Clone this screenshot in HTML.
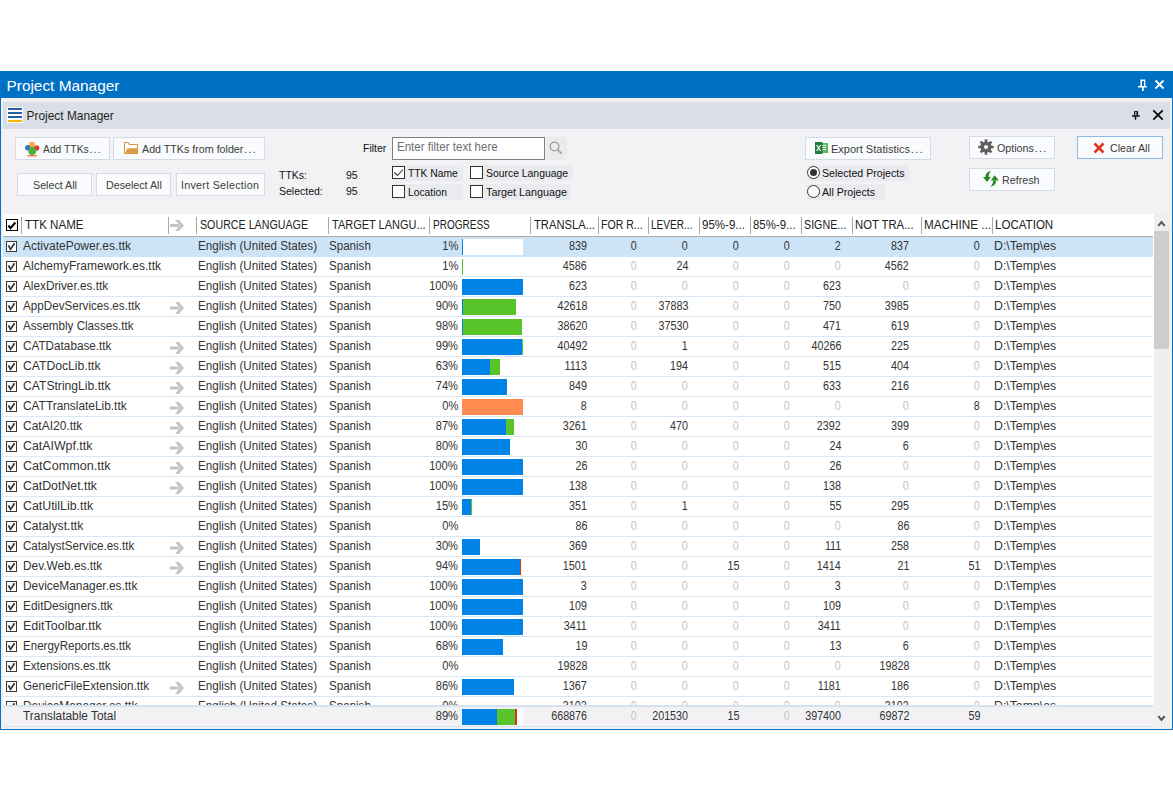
<!DOCTYPE html>
<html><head><meta charset="utf-8">
<style>
*{margin:0;padding:0;box-sizing:border-box}
html,body{width:1173px;height:800px;overflow:hidden;background:#fff;font-family:"Liberation Sans",sans-serif;}
.abs{position:absolute}
#frame{position:absolute;left:0;top:71px;width:1173px;height:659px;background:#f0f0f0;border-left:1px solid #0a6fc4;border-right:1px solid #0a6fc4;border-bottom:1px solid #0a6fc4}
#title{position:absolute;left:0;top:71px;width:1173px;height:27px;background:#0070c4}
#title .tx{position:absolute;left:6.5px;top:1px;line-height:27px;color:#fff;font-size:15.4px;white-space:nowrap}
#hdr{position:absolute;left:3px;top:102px;width:1167px;height:27px;background:#dadee7}
#hdr .tx{position:absolute;left:23.6px;top:1px;line-height:27px;color:#1e1e1e;font-size:11.9px;white-space:nowrap}
#tool{position:absolute;left:3px;top:129px;width:1167px;height:85px;background:#f2f2f4}
.btn{position:absolute;height:23px;background:#fafbfc;border:1px solid #d5dbe6;color:#3b3b3b;font-size:10.7px;line-height:23px;white-space:nowrap;}
.btn .l{position:absolute;top:0}
.lbl{position:absolute;color:#111;font-size:10.5px;white-space:nowrap;line-height:14px}
.ck{position:absolute;width:13px;height:13px;border:1px solid #333;background:#fff}
.ckbg{position:absolute;background:#eaebee}
.rd{position:absolute;width:13px;height:13px;border:1px solid #333;border-radius:50%;background:#fff}
#grid{position:absolute;left:3px;top:214px;width:1151px;height:491px;background:#fff;overflow:hidden}
#gh{position:absolute;left:0;top:0;width:1150px;height:23px;border-bottom:1px solid #a9a9a9;background:#fff}
#gh .h{position:absolute;top:0;line-height:22px;font-size:12px;color:#222;white-space:nowrap;transform-origin:0 0}
#gh .sep{position:absolute;top:3px;width:1px;height:17px;background:#a8a8a8}
.row{position:absolute;left:0;width:1150px;height:20px;border-bottom:1px solid #d8e8f7;background:#fff}
.row.sel{background:#cde4f7;border-bottom-color:#cde4f7}
.t{position:absolute;top:0;line-height:18px;font-size:12px;color:#333;white-space:nowrap}
.nm{left:20px;transform-origin:0 0}
.sl{left:195px;transform:scaleX(0.97);transform-origin:0 0}
.tl{left:326px;transform:scaleX(0.965);transform-origin:0 0}
.pc{right:695px;transform:scaleX(0.93);transform-origin:100% 0}
.loc{left:991px;transform:scaleX(1.025);transform-origin:0 0}
.n{transform:scaleX(0.895);transform-origin:100% 0}
.z{color:#c3c3c3}
.cb{position:absolute;left:3px;top:4px;width:11px;height:11px;border:1px solid #3a3a3a;background:#fff}
.cb svg{position:absolute;left:-1px;top:-1px}
.arr{position:absolute;left:167px;top:5px}
.bar{position:absolute;left:459px;top:2px;width:61px;height:16px;background:#fff}
.bar b{position:absolute;top:0;height:16px}
.bar .b{background:#0083e6}
.bar .g{background:#58c42a}
.bar .o{background:#ff8b50}
.bar .r{background:#e4301c}
#foot{position:absolute;left:3px;top:705px;width:1150px;height:22px;background:#f2f2f5;border-top:2px solid #d7e2ee;border-bottom:1px solid #d5e6f6}
#foot .t{top:0;line-height:19px}
#sb{position:absolute;left:1154px;top:214px;width:17px;height:513px;background:#efefef}
#thumb{position:absolute;left:0;top:17px;width:15px;height:118px;background:#cdcdcd}
</style></head><body>
<div id="frame"></div>
<div id="title"><span class="tx">Project Manager</span>
 <svg class="abs" style="left:1138px;top:8px" width="10" height="12" viewBox="0 0 10 12"><path d="M2.4 0.6h4.9v1.3H2.4z M2.4 0.6h1.6v6.6H2.4z M6.1 0.6h1.2v6.6H6.1z M0 7h8.8v1.5H0z M4 8.5h1.75V12H4z" fill="#fff"/></svg>
 <svg class="abs" style="left:1154px;top:8px" width="11" height="11" viewBox="0 0 11 11"><path d="M1.5 1.5l8 8M9.5 1.5l-8 8" stroke="#fff" stroke-width="1.8"/></svg>
</div>
<div id="hdr">
 <svg class="abs" style="left:4px;top:5px" width="16" height="16" viewBox="0 0 16 16"><rect x="0" y="0" width="16" height="16" fill="#fff"/><path d="M1 1h14v2H1z M1 5h14v2H1z M1 9h14v2H1z" fill="#2b5ea6"/><path d="M1 13h14v2H1z" fill="#f7b500"/></svg>
 <span class="tx">Project Manager</span>
 <svg class="abs" style="left:1129px;top:9px" width="8" height="10" viewBox="0 0 8 10"><path d="M2 0.1h4.1v4.2H2z" fill="#111"/><path d="M3.3 1.1h1.1v3H3.3z" fill="#dadee7"/><path d="M0 4.25h7.8v1.5H0z M2.75 5.7h1.5v3.1H2.75z" fill="#111"/></svg>
 <svg class="abs" style="left:1149px;top:7px" width="12" height="12" viewBox="0 0 12 12"><path d="M1.3 1.3l9.4 9.4M10.7 1.3l-9.4 9.4" stroke="#000" stroke-width="1.7"/></svg>
</div>
<div id="tool"></div>
<!-- toolbar buttons -->
<div class="btn" style="left:15px;top:137px;width:95px">
 <svg class="abs" style="left:9px;top:4px" width="15" height="15" viewBox="0 0 15 15"><circle cx="2.8" cy="5.8" r="2.7" fill="#2f6fd0"/><circle cx="11.6" cy="6" r="2.7" fill="#d63a32"/><circle cx="7" cy="2.6" r="2.8" fill="#eda53a"/><circle cx="7.2" cy="9" r="3.9" fill="#4caf3c"/><rect x="2.5" y="13" width="9.5" height="1.4" fill="#f07c3a"/></svg>
 <span class="l" style="left:27px;transform:scaleX(0.965);transform-origin:0 0">Add TTKs<span style="letter-spacing:1.3px;margin-left:0.8px">...</span></span></div>
<div class="btn" style="left:113px;top:137px;width:152px">
 <svg class="abs" style="left:10px;top:4px" width="15" height="13" viewBox="0 0 15 13"><path d="M0.5 0.5H4L5.5 2.5H13.5V11.5H0.5Z" fill="#fff" stroke="#dc9640" stroke-width="1.1"/><path d="M1 11.8L3.3 6.2H14V11.8Z" fill="#dd9a48"/></svg>
 <span class="l" style="left:28px">Add TTKs from folder<span style="letter-spacing:1.3px;margin-left:0.8px">...</span></span></div>
<div class="btn" style="left:17px;top:173px;width:75px;height:23px"><span class="l" style="left:15px">Select All</span></div>
<div class="btn" style="left:96px;top:173px;width:75px;height:23px"><span class="l" style="left:9px">Deselect All</span></div>
<div class="btn" style="left:176px;top:173px;width:89px;height:23px"><span class="l" style="left:4px;letter-spacing:0.28px">Invert Selection</span></div>

<span class="lbl" style="left:279px;top:168px">TTKs:</span>
<span class="lbl" style="left:346px;top:168px">95</span>
<span class="lbl" style="left:279px;top:184px">Selected:</span>
<span class="lbl" style="left:346px;top:184px">95</span>

<span class="lbl" style="left:363px;top:141px">Filter</span>
<div class="abs" style="left:392px;top:137px;width:153px;height:23px;background:#fff;border:1px solid #7f7f7f"><span class="abs" style="left:3.6px;top:0;line-height:19px;font-size:11.9px;color:#6e6e6e;white-space:nowrap;transform:scaleX(0.97);transform-origin:0 0">Enter filter text here</span></div>
<div class="abs" style="left:546px;top:137px;width:21px;height:23px;background:#ebebee"><svg class="abs" style="left:3px;top:4px" width="14" height="14" viewBox="0 0 14 14"><circle cx="5.5" cy="5.5" r="4.3" fill="none" stroke="#9a9a9a" stroke-width="1.3"/><path d="M8.6 8.6l4 4" stroke="#9a9a9a" stroke-width="1.6"/></svg></div>

<div class="ckbg" style="left:392px;top:165px;width:71px;height:16px"></div>
<div class="ckbg" style="left:470px;top:165px;width:103px;height:16px"></div>
<div class="ckbg" style="left:392px;top:184px;width:71px;height:16px"></div>
<div class="ckbg" style="left:470px;top:184px;width:101px;height:16px"></div>
<div class="ck" style="left:392px;top:166px"><svg class="abs" style="left:0;top:0" width="11" height="11" viewBox="0 0 11 11"><path d="M1.5 5.5l3 3 5.5-6" fill="none" stroke="#333" stroke-width="1.1"/></svg></div>
<div class="ck" style="left:470px;top:166px"></div>
<div class="ck" style="left:392px;top:185px"></div>
<div class="ck" style="left:470px;top:185px"></div>
<span class="lbl" style="left:408px;top:167px;font-size:10.3px">TTK Name</span>
<span class="lbl" style="left:486px;top:167px;font-size:10.4px">Source Language</span>
<span class="lbl" style="left:408px;top:186px;font-size:10.3px">Location</span>
<span class="lbl" style="left:486px;top:185px;font-size:10.8px">Target Language</span>

<div class="btn" style="left:805px;top:137px;width:126px">
 <svg class="abs" style="left:9px;top:4px" width="13" height="12" viewBox="0 0 13 12"><rect x="4" y="1" width="9" height="10" fill="#5cb85c"/><path d="M6 3h5v1H6zM6 5h5v1H6zM6 7h5v1H6z" fill="#fff"/><rect x="0" y="0" width="7.5" height="12" fill="#1e7b3c"/><path d="M1.6 3l4 6M5.6 3l-4 6" stroke="#fff" stroke-width="1.2"/></svg>
 <span class="l" style="left:25px;transform:scaleX(1.03);transform-origin:0 0">Export Statistics<span style="letter-spacing:1.3px;margin-left:0.8px">...</span></span></div>
<div class="ckbg" style="left:807px;top:165px;width:102px;height:16px"></div>
<div class="ckbg" style="left:807px;top:184px;width:78px;height:16px"></div>
<div class="rd" style="left:807px;top:166px"><div class="abs" style="left:1.8px;top:1.8px;width:7.4px;height:7.4px;border-radius:50%;background:#333"></div></div>
<div class="rd" style="left:807px;top:185px"></div>
<span class="lbl" style="left:822px;top:166px;font-size:10.6px">Selected Projects</span>
<span class="lbl" style="left:822px;top:185px;font-size:10.6px">All Projects</span>

<div class="btn" style="left:969px;top:136px;width:86px">
 <svg class="abs" style="left:8px;top:2px" width="16" height="16" viewBox="0 0 16 16"><g fill="#606060"><circle cx="8" cy="8" r="5.6"/><rect x="6.7" y="0.3" width="2.6" height="15.4" /><rect x="6.7" y="0.3" width="2.6" height="15.4" transform="rotate(45 8 8)"/><rect x="6.7" y="0.3" width="2.6" height="15.4" transform="rotate(90 8 8)"/><rect x="6.7" y="0.3" width="2.6" height="15.4" transform="rotate(135 8 8)"/></g><circle cx="8" cy="8" r="2.1" fill="#fafbfc"/></svg>
 <span class="l" style="left:27px">Options<span style="letter-spacing:1.3px;margin-left:0.8px">...</span></span></div>
<div class="btn" style="left:969px;top:168px;width:86px">
 <svg class="abs" style="left:13px;top:2px" width="17" height="17" viewBox="0 0 17 17"><path d="M0 6H8L4 11z M2.4 6.2Q2.4 1 8.2 0 Q5.6 2.2 5.6 6.2z" fill="#248a24"/><path d="M7.7 9.5H15.8L11.7 4.2z M13.2 9.3Q13.2 15 7 15.7 Q10.2 13.5 10.2 9.3z" fill="#248a24"/></svg>
 <span class="l" style="left:32px">Refresh</span></div>
<div class="btn" style="left:1077px;top:136px;width:86px;border-color:#8dbbe6">
 <svg class="abs" style="left:15px;top:5px" width="12" height="12" viewBox="0 0 12 12"><path d="M1.5 1.5l9 9M10.5 1.5l-9 9" stroke="#d9381e" stroke-width="2.6"/></svg>
 <span class="l" style="left:32px">Clear All</span></div>

<div id="grid">
 <div id="gh">
  <div class="abs" style="left:3px;top:5px;width:12px;height:12px;border:1px solid #000;background:#fff"><svg class="abs" style="left:-1px;top:-1px" width="12" height="12" viewBox="0 0 12 12"><path d="M2.4 6.5l2.1 2.6 4.9-5.6" fill="none" stroke="#000" stroke-width="2"/></svg></div>
  <div class="sep" style="left:18px"></div>
  <span class="h" style="left:22.3px;transform:scaleX(0.966)">TTK NAME</span>
  <div class="sep" style="left:165px"></div>
  <svg class="abs" style="left:167px;top:6px" width="16" height="11" viewBox="0 0 16 11"><path d="M0 4h9v3H0z M5 0h4l5 5.5-5 5.5H5l5-5.5z" fill="#c4c4c4"/></svg>
  <div class="sep" style="left:193px"></div>
  <span class="h" style="left:196.6px;transform:scaleX(0.890)">SOURCE LANGUAGE</span>
  <div class="sep" style="left:325px"></div>
  <span class="h" style="left:328.6px;transform:scaleX(0.915)">TARGET LANGU...</span>
  <div class="sep" style="left:426px"></div>
  <span class="h" style="left:429.5px;transform:scaleX(0.835)">PROGRESS</span>
  <div class="sep" style="left:527px"></div>
  <span class="h" style="left:530.5px;transform:scaleX(0.933)">TRANSLA...</span>
  <div class="sep" style="left:595px"></div>
  <span class="h" style="left:598.2px;transform:scaleX(0.880)">FOR R...</span>
  <div class="sep" style="left:645px"></div>
  <span class="h" style="left:648.2px;transform:scaleX(0.840)">LEVER...</span>
  <div class="sep" style="left:696px"></div>
  <span class="h" style="left:699.4px;transform:scaleX(0.961)">95%-9...</span>
  <div class="sep" style="left:747px"></div>
  <span class="h" style="left:750.1px;transform:scaleX(0.954)">85%-9...</span>
  <div class="sep" style="left:798px"></div>
  <span class="h" style="left:801.2px;transform:scaleX(0.891)">SIGNE...</span>
  <div class="sep" style="left:849px"></div>
  <span class="h" style="left:852.2px;transform:scaleX(0.941)">NOT TRA...</span>
  <div class="sep" style="left:918px"></div>
  <span class="h" style="left:921.1px;transform:scaleX(0.976)">MACHINE ...</span>
  <div class="sep" style="left:989px"></div>
  <span class="h" style="left:992.1px;transform:scaleX(0.963)">LOCATION</span>
 </div>
<div class="row sel" style="top:23px"><i class="cb"><svg width="11" height="11" viewBox="0 0 11 11"><path d="M2.4 4.4l2.1 4 4.1-6.2" fill="none" stroke="#333" stroke-width="1.7"/></svg></i><span class="t nm" style="transform:scaleX(1.0)">ActivatePower.es.ttk</span><span class="t sl">English (United States)</span><span class="t tl">Spanish</span><span class="t pc">1%</span><div class="bar"><b class="b" style="left:0px;width:1px"></b></div><span class="t n" style="right:566px">839</span><span class="t n" style="right:516px">0</span><span class="t n" style="right:465px">0</span><span class="t n" style="right:414px">0</span><span class="t n" style="right:363px">0</span><span class="t n" style="right:312px">2</span><span class="t n" style="right:244px">837</span><span class="t n" style="right:173px">0</span><span class="t loc">D:\Temp\es</span></div>
<div class="row" style="top:43px"><i class="cb"><svg width="11" height="11" viewBox="0 0 11 11"><path d="M2.4 4.4l2.1 4 4.1-6.2" fill="none" stroke="#333" stroke-width="1.7"/></svg></i><span class="t nm" style="transform:scaleX(1.0)">AlchemyFramework.es.ttk</span><span class="t sl">English (United States)</span><span class="t tl">Spanish</span><span class="t pc">1%</span><div class="bar"><b class="g" style="left:0px;width:1px"></b></div><span class="t n" style="right:566px">4586</span><span class="t n z" style="right:516px">0</span><span class="t n" style="right:465px">24</span><span class="t n z" style="right:414px">0</span><span class="t n z" style="right:363px">0</span><span class="t n z" style="right:312px">0</span><span class="t n" style="right:244px">4562</span><span class="t n z" style="right:173px">0</span><span class="t loc">D:\Temp\es</span></div>
<div class="row" style="top:63px"><i class="cb"><svg width="11" height="11" viewBox="0 0 11 11"><path d="M2.4 4.4l2.1 4 4.1-6.2" fill="none" stroke="#333" stroke-width="1.7"/></svg></i><span class="t nm" style="transform:scaleX(0.982)">AlexDriver.es.ttk</span><span class="t sl">English (United States)</span><span class="t tl">Spanish</span><span class="t pc">100%</span><div class="bar"><b class="b" style="left:0px;width:61px"></b></div><span class="t n" style="right:566px">623</span><span class="t n z" style="right:516px">0</span><span class="t n z" style="right:465px">0</span><span class="t n z" style="right:414px">0</span><span class="t n z" style="right:363px">0</span><span class="t n" style="right:312px">623</span><span class="t n z" style="right:244px">0</span><span class="t n z" style="right:173px">0</span><span class="t loc">D:\Temp\es</span></div>
<div class="row" style="top:83px"><i class="cb"><svg width="11" height="11" viewBox="0 0 11 11"><path d="M2.4 4.4l2.1 4 4.1-6.2" fill="none" stroke="#333" stroke-width="1.7"/></svg></i><span class="t nm" style="transform:scaleX(0.971)">AppDevServices.es.ttk</span><svg class="arr" width="16" height="12" viewBox="0 0 16 12"><path d="M0 4.5h9v3H0z M5 0h4l5 6-5 6H5l5-6z" fill="#c4c4c4"/></svg><span class="t sl">English (United States)</span><span class="t tl">Spanish</span><span class="t pc">90%</span><div class="bar"><b class="b" style="left:0px;width:1px"></b><b class="g" style="left:1px;width:53px"></b></div><span class="t n" style="right:566px">42618</span><span class="t n z" style="right:516px">0</span><span class="t n" style="right:465px">37883</span><span class="t n z" style="right:414px">0</span><span class="t n z" style="right:363px">0</span><span class="t n" style="right:312px">750</span><span class="t n" style="right:244px">3985</span><span class="t n z" style="right:173px">0</span><span class="t loc">D:\Temp\es</span></div>
<div class="row" style="top:103px"><i class="cb"><svg width="11" height="11" viewBox="0 0 11 11"><path d="M2.4 4.4l2.1 4 4.1-6.2" fill="none" stroke="#333" stroke-width="1.7"/></svg></i><span class="t nm" style="transform:scaleX(0.969)">Assembly Classes.ttk</span><span class="t sl">English (United States)</span><span class="t tl">Spanish</span><span class="t pc">98%</span><div class="bar"><b class="b" style="left:0px;width:1px"></b><b class="g" style="left:1px;width:59px"></b></div><span class="t n" style="right:566px">38620</span><span class="t n z" style="right:516px">0</span><span class="t n" style="right:465px">37530</span><span class="t n z" style="right:414px">0</span><span class="t n z" style="right:363px">0</span><span class="t n" style="right:312px">471</span><span class="t n" style="right:244px">619</span><span class="t n z" style="right:173px">0</span><span class="t loc">D:\Temp\es</span></div>
<div class="row" style="top:123px"><i class="cb"><svg width="11" height="11" viewBox="0 0 11 11"><path d="M2.4 4.4l2.1 4 4.1-6.2" fill="none" stroke="#333" stroke-width="1.7"/></svg></i><span class="t nm" style="transform:scaleX(0.978)">CATDatabase.ttk</span><svg class="arr" width="16" height="12" viewBox="0 0 16 12"><path d="M0 4.5h9v3H0z M5 0h4l5 6-5 6H5l5-6z" fill="#c4c4c4"/></svg><span class="t sl">English (United States)</span><span class="t tl">Spanish</span><span class="t pc">99%</span><div class="bar"><b class="b" style="left:0px;width:60px"></b><b class="g" style="left:60px;width:1px"></b></div><span class="t n" style="right:566px">40492</span><span class="t n z" style="right:516px">0</span><span class="t n" style="right:465px">1</span><span class="t n z" style="right:414px">0</span><span class="t n z" style="right:363px">0</span><span class="t n" style="right:312px">40266</span><span class="t n" style="right:244px">225</span><span class="t n z" style="right:173px">0</span><span class="t loc">D:\Temp\es</span></div>
<div class="row" style="top:143px"><i class="cb"><svg width="11" height="11" viewBox="0 0 11 11"><path d="M2.4 4.4l2.1 4 4.1-6.2" fill="none" stroke="#333" stroke-width="1.7"/></svg></i><span class="t nm" style="transform:scaleX(1.013)">CATDocLib.ttk</span><svg class="arr" width="16" height="12" viewBox="0 0 16 12"><path d="M0 4.5h9v3H0z M5 0h4l5 6-5 6H5l5-6z" fill="#c4c4c4"/></svg><span class="t sl">English (United States)</span><span class="t tl">Spanish</span><span class="t pc">63%</span><div class="bar"><b class="b" style="left:0px;width:28px"></b><b class="g" style="left:28px;width:10px"></b></div><span class="t n" style="right:566px">1113</span><span class="t n z" style="right:516px">0</span><span class="t n" style="right:465px">194</span><span class="t n z" style="right:414px">0</span><span class="t n z" style="right:363px">0</span><span class="t n" style="right:312px">515</span><span class="t n" style="right:244px">404</span><span class="t n z" style="right:173px">0</span><span class="t loc">D:\Temp\es</span></div>
<div class="row" style="top:163px"><i class="cb"><svg width="11" height="11" viewBox="0 0 11 11"><path d="M2.4 4.4l2.1 4 4.1-6.2" fill="none" stroke="#333" stroke-width="1.7"/></svg></i><span class="t nm" style="transform:scaleX(1.012)">CATStringLib.ttk</span><svg class="arr" width="16" height="12" viewBox="0 0 16 12"><path d="M0 4.5h9v3H0z M5 0h4l5 6-5 6H5l5-6z" fill="#c4c4c4"/></svg><span class="t sl">English (United States)</span><span class="t tl">Spanish</span><span class="t pc">74%</span><div class="bar"><b class="b" style="left:0px;width:45px"></b></div><span class="t n" style="right:566px">849</span><span class="t n z" style="right:516px">0</span><span class="t n z" style="right:465px">0</span><span class="t n z" style="right:414px">0</span><span class="t n z" style="right:363px">0</span><span class="t n" style="right:312px">633</span><span class="t n" style="right:244px">216</span><span class="t n z" style="right:173px">0</span><span class="t loc">D:\Temp\es</span></div>
<div class="row" style="top:183px"><i class="cb"><svg width="11" height="11" viewBox="0 0 11 11"><path d="M2.4 4.4l2.1 4 4.1-6.2" fill="none" stroke="#333" stroke-width="1.7"/></svg></i><span class="t nm" style="transform:scaleX(0.99)">CATTranslateLib.ttk</span><svg class="arr" width="16" height="12" viewBox="0 0 16 12"><path d="M0 4.5h9v3H0z M5 0h4l5 6-5 6H5l5-6z" fill="#c4c4c4"/></svg><span class="t sl">English (United States)</span><span class="t tl">Spanish</span><span class="t pc">0%</span><div class="bar"><b class="o" style="left:0px;width:61px"></b></div><span class="t n" style="right:566px">8</span><span class="t n z" style="right:516px">0</span><span class="t n z" style="right:465px">0</span><span class="t n z" style="right:414px">0</span><span class="t n z" style="right:363px">0</span><span class="t n z" style="right:312px">0</span><span class="t n z" style="right:244px">0</span><span class="t n" style="right:173px">8</span><span class="t loc">D:\Temp\es</span></div>
<div class="row" style="top:203px"><i class="cb"><svg width="11" height="11" viewBox="0 0 11 11"><path d="M2.4 4.4l2.1 4 4.1-6.2" fill="none" stroke="#333" stroke-width="1.7"/></svg></i><span class="t nm" style="transform:scaleX(1.0)">CatAI20.ttk</span><svg class="arr" width="16" height="12" viewBox="0 0 16 12"><path d="M0 4.5h9v3H0z M5 0h4l5 6-5 6H5l5-6z" fill="#c4c4c4"/></svg><span class="t sl">English (United States)</span><span class="t tl">Spanish</span><span class="t pc">87%</span><div class="bar"><b class="b" style="left:0px;width:44px"></b><b class="g" style="left:44px;width:8px"></b></div><span class="t n" style="right:566px">3261</span><span class="t n z" style="right:516px">0</span><span class="t n" style="right:465px">470</span><span class="t n z" style="right:414px">0</span><span class="t n z" style="right:363px">0</span><span class="t n" style="right:312px">2392</span><span class="t n" style="right:244px">399</span><span class="t n z" style="right:173px">0</span><span class="t loc">D:\Temp\es</span></div>
<div class="row" style="top:223px"><i class="cb"><svg width="11" height="11" viewBox="0 0 11 11"><path d="M2.4 4.4l2.1 4 4.1-6.2" fill="none" stroke="#333" stroke-width="1.7"/></svg></i><span class="t nm" style="transform:scaleX(1.03)">CatAIWpf.ttk</span><svg class="arr" width="16" height="12" viewBox="0 0 16 12"><path d="M0 4.5h9v3H0z M5 0h4l5 6-5 6H5l5-6z" fill="#c4c4c4"/></svg><span class="t sl">English (United States)</span><span class="t tl">Spanish</span><span class="t pc">80%</span><div class="bar"><b class="b" style="left:0px;width:48px"></b></div><span class="t n" style="right:566px">30</span><span class="t n z" style="right:516px">0</span><span class="t n z" style="right:465px">0</span><span class="t n z" style="right:414px">0</span><span class="t n z" style="right:363px">0</span><span class="t n" style="right:312px">24</span><span class="t n" style="right:244px">6</span><span class="t n z" style="right:173px">0</span><span class="t loc">D:\Temp\es</span></div>
<div class="row" style="top:243px"><i class="cb"><svg width="11" height="11" viewBox="0 0 11 11"><path d="M2.4 4.4l2.1 4 4.1-6.2" fill="none" stroke="#333" stroke-width="1.7"/></svg></i><span class="t nm" style="transform:scaleX(1.049)">CatCommon.ttk</span><svg class="arr" width="16" height="12" viewBox="0 0 16 12"><path d="M0 4.5h9v3H0z M5 0h4l5 6-5 6H5l5-6z" fill="#c4c4c4"/></svg><span class="t sl">English (United States)</span><span class="t tl">Spanish</span><span class="t pc">100%</span><div class="bar"><b class="b" style="left:0px;width:61px"></b></div><span class="t n" style="right:566px">26</span><span class="t n z" style="right:516px">0</span><span class="t n z" style="right:465px">0</span><span class="t n z" style="right:414px">0</span><span class="t n z" style="right:363px">0</span><span class="t n" style="right:312px">26</span><span class="t n z" style="right:244px">0</span><span class="t n z" style="right:173px">0</span><span class="t loc">D:\Temp\es</span></div>
<div class="row" style="top:263px"><i class="cb"><svg width="11" height="11" viewBox="0 0 11 11"><path d="M2.4 4.4l2.1 4 4.1-6.2" fill="none" stroke="#333" stroke-width="1.7"/></svg></i><span class="t nm" style="transform:scaleX(1.028)">CatDotNet.ttk</span><svg class="arr" width="16" height="12" viewBox="0 0 16 12"><path d="M0 4.5h9v3H0z M5 0h4l5 6-5 6H5l5-6z" fill="#c4c4c4"/></svg><span class="t sl">English (United States)</span><span class="t tl">Spanish</span><span class="t pc">100%</span><div class="bar"><b class="b" style="left:0px;width:61px"></b></div><span class="t n" style="right:566px">138</span><span class="t n z" style="right:516px">0</span><span class="t n z" style="right:465px">0</span><span class="t n z" style="right:414px">0</span><span class="t n z" style="right:363px">0</span><span class="t n" style="right:312px">138</span><span class="t n z" style="right:244px">0</span><span class="t n z" style="right:173px">0</span><span class="t loc">D:\Temp\es</span></div>
<div class="row" style="top:283px"><i class="cb"><svg width="11" height="11" viewBox="0 0 11 11"><path d="M2.4 4.4l2.1 4 4.1-6.2" fill="none" stroke="#333" stroke-width="1.7"/></svg></i><span class="t nm" style="transform:scaleX(1.03)">CatUtilLib.ttk</span><span class="t sl">English (United States)</span><span class="t tl">Spanish</span><span class="t pc">15%</span><div class="bar"><b class="b" style="left:0px;width:9px"></b><b class="g" style="left:9px;width:1px"></b></div><span class="t n" style="right:566px">351</span><span class="t n z" style="right:516px">0</span><span class="t n" style="right:465px">1</span><span class="t n z" style="right:414px">0</span><span class="t n z" style="right:363px">0</span><span class="t n" style="right:312px">55</span><span class="t n" style="right:244px">295</span><span class="t n z" style="right:173px">0</span><span class="t loc">D:\Temp\es</span></div>
<div class="row" style="top:303px"><i class="cb"><svg width="11" height="11" viewBox="0 0 11 11"><path d="M2.4 4.4l2.1 4 4.1-6.2" fill="none" stroke="#333" stroke-width="1.7"/></svg></i><span class="t nm" style="transform:scaleX(1.017)">Catalyst.ttk</span><span class="t sl">English (United States)</span><span class="t tl">Spanish</span><span class="t pc">0%</span><span class="t n" style="right:566px">86</span><span class="t n z" style="right:516px">0</span><span class="t n z" style="right:465px">0</span><span class="t n z" style="right:414px">0</span><span class="t n z" style="right:363px">0</span><span class="t n z" style="right:312px">0</span><span class="t n" style="right:244px">86</span><span class="t n z" style="right:173px">0</span><span class="t loc">D:\Temp\es</span></div>
<div class="row" style="top:323px"><i class="cb"><svg width="11" height="11" viewBox="0 0 11 11"><path d="M2.4 4.4l2.1 4 4.1-6.2" fill="none" stroke="#333" stroke-width="1.7"/></svg></i><span class="t nm" style="transform:scaleX(0.965)">CatalystService.es.ttk</span><svg class="arr" width="16" height="12" viewBox="0 0 16 12"><path d="M0 4.5h9v3H0z M5 0h4l5 6-5 6H5l5-6z" fill="#c4c4c4"/></svg><span class="t sl">English (United States)</span><span class="t tl">Spanish</span><span class="t pc">30%</span><div class="bar"><b class="b" style="left:0px;width:18px"></b></div><span class="t n" style="right:566px">369</span><span class="t n z" style="right:516px">0</span><span class="t n z" style="right:465px">0</span><span class="t n z" style="right:414px">0</span><span class="t n z" style="right:363px">0</span><span class="t n" style="right:312px">111</span><span class="t n" style="right:244px">258</span><span class="t n z" style="right:173px">0</span><span class="t loc">D:\Temp\es</span></div>
<div class="row" style="top:343px"><i class="cb"><svg width="11" height="11" viewBox="0 0 11 11"><path d="M2.4 4.4l2.1 4 4.1-6.2" fill="none" stroke="#333" stroke-width="1.7"/></svg></i><span class="t nm" style="transform:scaleX(0.987)">Dev.Web.es.ttk</span><svg class="arr" width="16" height="12" viewBox="0 0 16 12"><path d="M0 4.5h9v3H0z M5 0h4l5 6-5 6H5l5-6z" fill="#c4c4c4"/></svg><span class="t sl">English (United States)</span><span class="t tl">Spanish</span><span class="t pc">94%</span><div class="bar"><b class="b" style="left:0px;width:58px"></b><b class="r" style="left:58px;width:1px"></b></div><span class="t n" style="right:566px">1501</span><span class="t n z" style="right:516px">0</span><span class="t n z" style="right:465px">0</span><span class="t n" style="right:414px">15</span><span class="t n z" style="right:363px">0</span><span class="t n" style="right:312px">1414</span><span class="t n" style="right:244px">21</span><span class="t n" style="right:173px">51</span><span class="t loc">D:\Temp\es</span></div>
<div class="row" style="top:363px"><i class="cb"><svg width="11" height="11" viewBox="0 0 11 11"><path d="M2.4 4.4l2.1 4 4.1-6.2" fill="none" stroke="#333" stroke-width="1.7"/></svg></i><span class="t nm" style="transform:scaleX(0.991)">DeviceManager.es.ttk</span><span class="t sl">English (United States)</span><span class="t tl">Spanish</span><span class="t pc">100%</span><div class="bar"><b class="b" style="left:0px;width:61px"></b></div><span class="t n" style="right:566px">3</span><span class="t n z" style="right:516px">0</span><span class="t n z" style="right:465px">0</span><span class="t n z" style="right:414px">0</span><span class="t n z" style="right:363px">0</span><span class="t n" style="right:312px">3</span><span class="t n z" style="right:244px">0</span><span class="t n z" style="right:173px">0</span><span class="t loc">D:\Temp\es</span></div>
<div class="row" style="top:383px"><i class="cb"><svg width="11" height="11" viewBox="0 0 11 11"><path d="M2.4 4.4l2.1 4 4.1-6.2" fill="none" stroke="#333" stroke-width="1.7"/></svg></i><span class="t nm" style="transform:scaleX(0.989)">EditDesigners.ttk</span><span class="t sl">English (United States)</span><span class="t tl">Spanish</span><span class="t pc">100%</span><div class="bar"><b class="b" style="left:0px;width:61px"></b></div><span class="t n" style="right:566px">109</span><span class="t n z" style="right:516px">0</span><span class="t n z" style="right:465px">0</span><span class="t n z" style="right:414px">0</span><span class="t n z" style="right:363px">0</span><span class="t n" style="right:312px">109</span><span class="t n z" style="right:244px">0</span><span class="t n z" style="right:173px">0</span><span class="t loc">D:\Temp\es</span></div>
<div class="row" style="top:403px"><i class="cb"><svg width="11" height="11" viewBox="0 0 11 11"><path d="M2.4 4.4l2.1 4 4.1-6.2" fill="none" stroke="#333" stroke-width="1.7"/></svg></i><span class="t nm" style="transform:scaleX(1.041)">EditToolbar.ttk</span><span class="t sl">English (United States)</span><span class="t tl">Spanish</span><span class="t pc">100%</span><div class="bar"><b class="b" style="left:0px;width:61px"></b></div><span class="t n" style="right:566px">3411</span><span class="t n z" style="right:516px">0</span><span class="t n z" style="right:465px">0</span><span class="t n z" style="right:414px">0</span><span class="t n z" style="right:363px">0</span><span class="t n" style="right:312px">3411</span><span class="t n z" style="right:244px">0</span><span class="t n z" style="right:173px">0</span><span class="t loc">D:\Temp\es</span></div>
<div class="row" style="top:423px"><i class="cb"><svg width="11" height="11" viewBox="0 0 11 11"><path d="M2.4 4.4l2.1 4 4.1-6.2" fill="none" stroke="#333" stroke-width="1.7"/></svg></i><span class="t nm" style="transform:scaleX(0.964)">EnergyReports.es.ttk</span><span class="t sl">English (United States)</span><span class="t tl">Spanish</span><span class="t pc">68%</span><div class="bar"><b class="b" style="left:0px;width:41px"></b></div><span class="t n" style="right:566px">19</span><span class="t n z" style="right:516px">0</span><span class="t n z" style="right:465px">0</span><span class="t n z" style="right:414px">0</span><span class="t n z" style="right:363px">0</span><span class="t n" style="right:312px">13</span><span class="t n" style="right:244px">6</span><span class="t n z" style="right:173px">0</span><span class="t loc">D:\Temp\es</span></div>
<div class="row" style="top:443px"><i class="cb"><svg width="11" height="11" viewBox="0 0 11 11"><path d="M2.4 4.4l2.1 4 4.1-6.2" fill="none" stroke="#333" stroke-width="1.7"/></svg></i><span class="t nm" style="transform:scaleX(0.966)">Extensions.es.ttk</span><span class="t sl">English (United States)</span><span class="t tl">Spanish</span><span class="t pc">0%</span><span class="t n" style="right:566px">19828</span><span class="t n z" style="right:516px">0</span><span class="t n z" style="right:465px">0</span><span class="t n z" style="right:414px">0</span><span class="t n z" style="right:363px">0</span><span class="t n z" style="right:312px">0</span><span class="t n" style="right:244px">19828</span><span class="t n z" style="right:173px">0</span><span class="t loc">D:\Temp\es</span></div>
<div class="row" style="top:463px"><i class="cb"><svg width="11" height="11" viewBox="0 0 11 11"><path d="M2.4 4.4l2.1 4 4.1-6.2" fill="none" stroke="#333" stroke-width="1.7"/></svg></i><span class="t nm" style="transform:scaleX(0.969)">GenericFileExtension.ttk</span><svg class="arr" width="16" height="12" viewBox="0 0 16 12"><path d="M0 4.5h9v3H0z M5 0h4l5 6-5 6H5l5-6z" fill="#c4c4c4"/></svg><span class="t sl">English (United States)</span><span class="t tl">Spanish</span><span class="t pc">86%</span><div class="bar"><b class="b" style="left:0px;width:52px"></b></div><span class="t n" style="right:566px">1367</span><span class="t n z" style="right:516px">0</span><span class="t n z" style="right:465px">0</span><span class="t n z" style="right:414px">0</span><span class="t n z" style="right:363px">0</span><span class="t n" style="right:312px">1181</span><span class="t n" style="right:244px">186</span><span class="t n z" style="right:173px">0</span><span class="t loc">D:\Temp\es</span></div>
<div class="row" style="top:483px"><i class="cb"><svg width="11" height="11" viewBox="0 0 11 11"><path d="M2.4 4.4l2.1 4 4.1-6.2" fill="none" stroke="#333" stroke-width="1.7"/></svg></i><span class="t nm" style="transform:scaleX(0.991)">DeviceManager.es.ttk</span><span class="t sl">English (United States)</span><span class="t tl">Spanish</span><span class="t pc">0%</span><span class="t n" style="right:566px">3102</span><span class="t n z" style="right:516px">0</span><span class="t n z" style="right:465px">0</span><span class="t n z" style="right:414px">0</span><span class="t n z" style="right:363px">0</span><span class="t n z" style="right:312px">0</span><span class="t n" style="right:244px">3102</span><span class="t n z" style="right:173px">0</span><span class="t loc">D:\Temp\es</span></div>
</div>
<div id="foot">
 <span class="t" style="left:20px;transform:scaleX(0.99);transform-origin:0 0">Translatable Total</span>
 <span class="t pc">89%</span>
 <div class="bar" style="top:2px;height:16px"><b class="b" style="left:0;width:35px"></b><b class="g" style="left:35px;width:18px"></b><b class="r" style="left:53px;width:2px"></b></div>
 <span class="t n" style="right:566px">668876</span><span class="t n z" style="right:516px">0</span><span class="t n" style="right:465px">201530</span><span class="t n" style="right:414px">15</span><span class="t n z" style="right:363px">0</span><span class="t n" style="right:312px">397400</span><span class="t n" style="right:244px">69872</span><span class="t n" style="right:173px">59</span>
</div>
<div id="sb">
 <svg class="abs" style="left:3px;top:6px" width="9" height="7" viewBox="0 0 9 7"><path d="M1.3 5.8l3.2-3.8 3.2 3.8" fill="none" stroke="#555" stroke-width="2"/></svg>
 <div id="thumb"></div>
 <svg class="abs" style="left:3px;top:501px" width="9" height="7" viewBox="0 0 9 7"><path d="M1.3 1.2l3.2 3.8 3.2-3.8" fill="none" stroke="#555" stroke-width="2"/></svg>
</div>
</body></html>
